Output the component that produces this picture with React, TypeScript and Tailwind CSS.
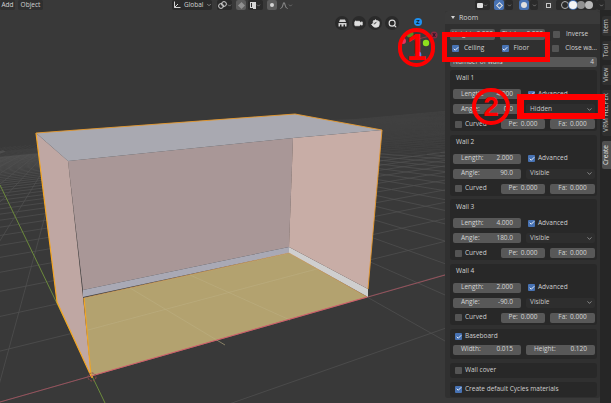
import React from 'react';
import { ChevronDown, Hand, Search, Video, Check } from 'lucide-react';

const FONT = { fontFamily: '"Open Sans", sans-serif' };

// floor homography: world (0..1, 0..1) maps onto the room's floor quad
const quad = [[91, 376], [367, 297], [289, 253], [84, 298]];

const makeProjector = () => {
    const [[x0, y0], [x1, y1], [x2, y2], [x3, y3]] = quad;
    const dx1 = x1 - x2, dx2 = x3 - x2, sx = x0 - x1 + x2 - x3;
    const dy1 = y1 - y2, dy2 = y3 - y2, sy = y0 - y1 + y2 - y3;
    const det = dx1 * dy2 - dx2 * dy1;
    const g = (sx * dy2 - dx2 * sy) / det;
    const h = (dx1 * sy - sx * dy1) / det;
    const a = x1 - x0 + g * x1, b = x3 - x0 + h * x3;
    const d = y1 - y0 + g * y1, e = y3 - y0 + h * y3;
    return (u: number, v: number) => {
        const w = g * u + h * v + 1;
        return { x: (a * u + b * v + x0) / w, y: (d * u + e * v + y0) / w, w };
    };
};

const project = makeProjector();

const gridLines = () => {
    const lines: { x1: number; y1: number; x2: number; y2: number }[] = [];
    const push = (u1: number, v1: number, u2: number, v2: number) => {
        // walk along the line and keep the part in front of the horizon
        let prev = null as null | { x: number; y: number };
        const steps = 24;
        for (let i = 0; i <= steps; i++) {
            const t = i / steps;
            const p = project(u1 + (u2 - u1) * t, v1 + (v2 - v1) * t);
            if (p.w > 0.12) {
                if (prev) lines.push({ x1: prev.x, y1: prev.y, x2: p.x, y2: p.y });
                prev = p;
            } else {
                prev = null;
            }
        }
    };
    for (let i = -40; i <= 60; i++) {
        push(i / 4, -20, i / 4, 40);
        push(-20, i / 2, 40, i / 2);
    }
    return lines;
};

const Viewport = () => {
    const lines = gridLines();
    return (
        <svg width="445" height="403" viewBox="0 0 445 403" className="block shrink-0">
            <rect width="445" height="403" fill="#393939" />
            {lines.map((l, i) => (
                <line key={i} x1={l.x1} y1={l.y1} x2={l.x2} y2={l.y2} stroke={l.y2 < 150 ? '#404040' : '#515151'} strokeWidth="0.7" />
            ))}
            <line x1="0" y1="402" x2="445" y2="275" stroke="#96525c" strokeWidth="1" />
            <line x1="0" y1="185" x2="105" y2="403" stroke="#6c8a3c" strokeWidth="1" />

            <polygon points="84,298 289,253 367,297 91,376" fill="#b3a26f" />
            <line x1="130" y1="288" x2="225" y2="345" stroke="#bcae82" strokeWidth="0.6" />
            <line x1="190" y1="275" x2="290" y2="320" stroke="#bcae82" strokeWidth="0.6" />
            <line x1="88" y1="330" x2="328" y2="266" stroke="#bcae82" strokeWidth="0.6" />
            <polygon points="68,161 293,138 289,247 83,290" fill="#a99797" />
            <polygon points="83,290 289,247 289,253 83,297" fill="#a9a9b5" />
            <polygon points="289,247 368,289 368,297 289,253" fill="#cfcfcf" />
            <polygon points="293,138 382,130 368,289 289,247" fill="#c8ada6" />
            <polygon points="36,133 68,161 83,297 91,376 57,302" fill="#bfa7a3" />
            <polygon points="36,133 295,114 382,130 293,138 68,161" fill="#a9a9b1" />

            <polyline points="36,133 57,302 91,376 84,298" fill="none" stroke="#f5a623" strokeWidth="1.2" />
            <polyline points="36,133 295,114 382,130 368,289" fill="none" stroke="#e89a2c" strokeWidth="0.9" />
            <line x1="84" y1="298" x2="289" y2="253" stroke="#e3a65c" strokeWidth="0.6" />
            <line x1="289" y1="253" x2="367" y2="297" stroke="#e3a65c" strokeWidth="0.6" />
            <line x1="91" y1="376" x2="367" y2="297" stroke="#d0616b" strokeWidth="1" />
            <circle cx="92" cy="377" r="4" fill="none" stroke="#8c4b4b" strokeWidth="1" strokeDasharray="2 1" />
            <circle cx="92" cy="377" r="1" fill="#f5a623" />

            {/* axis gizmo */}
            <line x1="414" y1="40" x2="434" y2="35" stroke="#8f3a45" strokeWidth="1" />
            <circle cx="418" cy="22" r="4" fill="#1e90f0" />
            <text x="418" y="24" textAnchor="middle" fontSize="6" fontWeight="700" fill="#10202c" style={FONT}>Z</text>
            <circle cx="434" cy="35" r="3.5" fill="#8a2a40" />
            <text x="434" y="37" textAnchor="middle" fontSize="5" fontWeight="700" fill="#10101c" style={FONT}>X</text>
            <circle cx="410" cy="34" r="3.5" fill="#5e8a1e" />
            <circle cx="403" cy="41" r="3" fill="#e8305a" />
            <circle cx="426" cy="43" r="3.2" fill="#8fe01e" />
            <circle cx="418" cy="55" r="3.4" fill="#2f83d8" />
        </svg>
    );
};

const Field = ({ label, value, className }: { label: string; value?: string; className: string }) => (
    <div className={`flex h-[10px] items-center justify-between rounded-[2px] bg-[#585858] px-2 text-[6.5px] leading-none text-[#d4d4d4] ${className}`}>
        <span>{label}</span>
        {value && <span>{value}</span>}
    </div>
);

const Box = ({ on }: { on: boolean }) => (
    <span className={`flex h-[7px] w-[7px] shrink-0 items-center justify-center rounded-[1px] ${on ? 'bg-[#4772b3]' : 'bg-[#545454]'}`}>
        {on && <Check size={6} strokeWidth={3.5} color="#ffffff" />}
    </span>
);

const CheckLabel = ({ on, label, className = '' }: { on: boolean; label: string; className?: string }) => (
    <div className={`flex h-[10px] items-center gap-[3px] text-[6.5px] leading-none text-[#d0d0d0] ${className}`}>
        <Box on={on} />
        <span className="whitespace-nowrap">{label}</span>
    </div>
);

const Wall = ({ name, length, angle, mode }: { name: string; length: string; angle: string; mode: string }) => (
    <div className="h-[61px] shrink-0 rounded-[3px] bg-[#282828] pl-[3px] pr-[2px]">
        <div className="flex h-[16px] items-center pl-[3px] text-[6.5px] leading-none text-[#d4d4d4]">{name}</div>
        <div className="mt-[3px] flex flex-col gap-[5px]">
            <div className="flex items-center">
                <Field label="Length:" value={length} className="w-[68px]" />
                <CheckLabel on label="Advanced" className="ml-[7px]" />
            </div>
            <div className="flex items-center gap-[5px]">
                <Field label="Angle:" value={angle} className="w-[68px]" />
                <div className="flex h-[10px] w-[69px] items-center justify-between rounded-[2px] bg-[#2e2e2e] pl-[4px] pr-[2px] text-[6.5px] leading-none text-[#c8c8c8]">
                    <span>{mode}</span>
                    <ChevronDown size={7} color="#c8c8c8" />
                </div>
            </div>
            <div className="flex items-center">
                <CheckLabel on={false} label="Curved" className="ml-[2px] w-[46px]" />
                <Field label="Pe:" value="0.000" className="w-[44px] justify-center gap-[3px] !px-0" />
                <Field label="Fa:" value="0.000" className="ml-[5px] w-[45px] justify-center gap-[3px] !px-0" />
            </div>
        </div>
    </div>
);

const Panel = () => (
    <div className="mt-[11px] flex h-[387px] w-[155px] shrink-0 flex-col rounded-[3px] bg-[#303030] pl-[5px] pr-[3px]" style={FONT}>
        <div className="-ml-[5px] -mr-[3px] flex h-[13px] items-center gap-[4px] rounded-t-[3px] bg-[#3a3a3a] pl-[6px] text-[7px] leading-none text-[#d4d4d4]">
            <span className="h-0 w-0 border-x-[2px] border-t-[3px] border-x-transparent border-t-[#d4d4d4]" />
            <span>Room</span>
        </div>
        <div className="mt-[5px] flex h-[11px] items-center">
            <Field label="Height:" value="3.000" className="h-[11px] w-[45px] !px-[2px]" />
            <Field label="Thick:" value="0.000" className="ml-[5px] h-[11px] w-[45px] !px-[2px]" />
            <CheckLabel on={false} label="Inverse" className="ml-[8px] gap-[6px]" />
        </div>
        <div className="flex h-[17px] items-center">
            <CheckLabel on label="Ceiling" className="ml-[2px] w-[50px] gap-[5px]" />
            <CheckLabel on label="Floor" className="w-[51px] gap-[5px]" />
            <CheckLabel on={false} label="Close wa..." className="gap-[6px]" />
        </div>
        <Field label="Number of walls" value="4" className="h-[9px] !px-[3px]" />
        <div className="mt-[3px] flex flex-col gap-[3.5px]">
            <Wall name="Wall 1" length="4.000" angle="0.0" mode="Hidden" />
            <Wall name="Wall 2" length="2.000" angle="90.0" mode="Visible" />
            <Wall name="Wall 3" length="4.000" angle="180.0" mode="Visible" />
            <Wall name="Wall 4" length="2.000" angle="-90.0" mode="Visible" />
        </div>
        <div className="mt-[4px] h-[30px] shrink-0 rounded-[3px] bg-[#282828] pl-[3px] pr-[2px]">
            <CheckLabel on label="Baseboard" className="ml-[2px] mt-[3px]" />
            <div className="mt-[3px] flex gap-[5px]">
                <Field label="Width:" value="0.015" className="w-[68px]" />
                <Field label="Height:" value="0.120" className="w-[69px]" />
            </div>
        </div>
        <div className="mt-[4px] flex h-[15px] shrink-0 items-center rounded-[3px] bg-[#282828] pl-[5px]">
            <CheckLabel on={false} label="Wall cover" />
        </div>
        <div className="mt-[4px] flex h-[15px] shrink-0 items-center rounded-[3px] bg-[#282828] pl-[5px]">
            <CheckLabel on label="Create default Cycles materials" />
        </div>
    </div>
);

const Tab = ({ label, className = '' }: { label: string; className?: string }) => (
    <div className={`flex items-center justify-center rounded-r-[2px] text-[6.5px] leading-none [writing-mode:vertical-rl] rotate-180 whitespace-nowrap ${className}`}>
        {label}
    </div>
);

const Tabs = () => (
    <div className="mt-[10px] flex h-[393px] w-[11px] shrink-0 flex-col gap-[5px] bg-[#262626] pl-[2px] pt-[6px]" style={FONT}>
        <Tab label="Item" className="h-[20px] bg-[#2f2f2f] text-[#c8c8c8]" />
        <Tab label="Tool" className="h-[19px] bg-[#2f2f2f] text-[#c8c8c8]" />
        <Tab label="View" className="h-[20px] bg-[#2f2f2f] text-[#c8c8c8]" />
        <Tab label="VRM HELPER" className="h-[46px] bg-[#2f2f2f] text-[#c8c8c8]" />
        <Tab label="Create" className="h-[28px] bg-[#505050] text-[#e0e0e0]" />
    </div>
);

const Chip = ({ children, className = '' }: { children?: React.ReactNode; className?: string }) => (
    <div className={`flex h-[10px] items-center justify-center rounded-[2px] text-[6.5px] leading-none text-[#d4d4d4] ${className}`}>
        {children}
    </div>
);

const HeaderBar = () => (
    <div className="absolute left-0 top-0 flex h-[10px] w-[611px] items-center" style={FONT}>
        <Chip className="w-[15px] bg-[#2f2f2f]">Add</Chip>
        <Chip className="ml-[3px] w-[25px] bg-[#2f2f2f]">Object</Chip>
        <Chip className="ml-[129px] w-[40px] !justify-start bg-[#2a2a2a] pl-[1px]">
            <svg width="8" height="8" viewBox="0 0 8 8" fill="none" stroke="#d4d4d4" strokeWidth="1">
                <path d="M1.5 0.5 V6.5 H7.5 M1.5 6.5 L5 3" />
            </svg>
            <span className="ml-[3px]">Global</span>
            <ChevronDown size={6} color="#d4d4d4" className="ml-[2px]" />
        </Chip>
        <Chip className="ml-[5px] w-[15px] bg-[#2a2a2a]">
            <svg width="9" height="8" viewBox="0 0 9 8" fill="none" stroke="#d4d4d4" strokeWidth="1">
                <circle cx="3" cy="5" r="2.4" />
                <circle cx="6" cy="3" r="2.4" />
            </svg>
            <ChevronDown size={5} color="#d4d4d4" />
        </Chip>
        <Chip className="ml-[4px] w-[10px] bg-[#5c5c5c]">
            <span className="h-[5px] w-[5px] rotate-45 bg-[#909090]" />
        </Chip>
        <Chip className="ml-[2px] w-[15px] bg-[#2a2a2a]">
            <span className="h-[6px] w-[3px] border border-[#d4d4d4]" />
            <span className="h-[7px] w-[3px] bg-[#d4d4d4]" />
            <ChevronDown size={5} color="#d4d4d4" />
        </Chip>
        <Chip className="ml-[4px] w-[10px] bg-[#5c5c5c]">
            <span className="h-[4px] w-[4px] rounded-full bg-[#d4d4d4]" />
        </Chip>
        <Chip className="ml-[2px] w-[14px]">
            <svg width="8" height="7" viewBox="0 0 8 7" fill="none" stroke="#b0b0b0" strokeWidth="0.8">
                <path d="M0.5 6.5 C3 6 3 0.5 4 0.5 C5 0.5 5 6 7.5 6.5" />
            </svg>
            <ChevronDown size={5} color="#b0b0b0" />
        </Chip>
        <Chip className="ml-[182px] w-[15px] bg-[#2a2a2a]">
            <span className="h-[5px] w-[6px] rounded-[1px] bg-[#e0e0e0]" />
            <ChevronDown size={5} color="#d4d4d4" />
        </Chip>
        <Chip className="ml-[4px] w-[10px] bg-[#4772b3]">
            <span className="h-[5px] w-[5px] rotate-45 border border-[#e0e0e0]" />
        </Chip>
        <Chip className="ml-[1px] w-[8px] bg-[#2a2a2a]"><ChevronDown size={5} color="#d4d4d4" /></Chip>
        <Chip className="ml-[6px] w-[10px] bg-[#4772b3]">
            <span className="h-[6px] w-[6px] rounded-full bg-[#e0e0e0]" />
        </Chip>
        <Chip className="ml-[1px] w-[8px] bg-[#2a2a2a]"><ChevronDown size={5} color="#d4d4d4" /></Chip>
        <Chip className="ml-[5px] w-[10px] bg-[#3c3c3c]">
            <span className="h-[5px] w-[5px] border border-[#c8c8c8]" />
        </Chip>
        <Chip className="ml-[3px] w-[41px] justify-around bg-[#2a2a2a]">
            <span className="h-[8px] w-[8px] rounded-full border border-[#b0b0b0]" />
            <span className="h-[8px] w-[8px] rounded-full bg-[#f4f4f4] ring-1 ring-[#4772b3]" />
            <span className="h-[8px] w-[8px] rounded-full bg-[#909090]" />
            <span className="h-[8px] w-[8px] rounded-full bg-[#b8b8b8]" />
        </Chip>
        <Chip className="w-[8px] bg-[#2a2a2a]"><ChevronDown size={5} color="#d4d4d4" /></Chip>
    </div>
);

const NavButton = ({ children }: { children: React.ReactNode }) => (
    <div className="flex h-[14px] w-[14px] items-center justify-center rounded-full bg-[#2a2a2a]">{children}</div>
);

const NavGizmos = () => (
    <div className="absolute left-[335px] top-[16px] flex gap-[2.7px]">
        <NavButton>
            <svg width="9" height="8" viewBox="0 0 9 8" fill="#d4d4d4">
                <path d="M2 0.5 H7 L8 3 H1 Z M0.5 4 H8.5 V7.5 H7 V5.5 H5.5 V7.5 H3.5 V5.5 H2 V7.5 H0.5 Z" />
            </svg>
        </NavButton>
        <NavButton><Video size={9} color="#e0e0e0" fill="#e0e0e0" /></NavButton>
        <NavButton><Hand size={9} color="#e0e0e0" fill="#e0e0e0" /></NavButton>
        <NavButton><Search size={9} color="#e0e0e0" strokeWidth={3} /></NavButton>
    </div>
);

const Marker = ({ n, className }: { n: string; className: string }) => (
    <div className={`absolute flex items-center justify-center rounded-full border-[4px] border-[#ff0000] font-bold leading-none text-[#ff0000] ${className}`} style={{ fontFamily: '"Liberation Sans", sans-serif' }}>
        {n}
    </div>
);

const App: React.FC = () => (
    <div className="relative flex h-[403px] w-[611px] overflow-hidden bg-[#393939]">
        <Viewport />
        <Panel />
        <Tabs />
        <HeaderBar />
        <NavGizmos />
        <div className="absolute left-[442px] top-[32px] h-[30px] w-[108px] border-[5px] border-[#ff0000]" />
        <div className="absolute left-[517px] top-[94px] h-[25px] w-[88px] border-x-[7px] border-y-[6px] border-[#ff0000]" />
        <Marker n="1" className="left-[398px] top-[28px] h-[39px] w-[37px] text-[36px]" />
        <Marker n="2" className="left-[472px] top-[88px] h-[37px] w-[38px] text-[28px]" />
    </div>
);

export default App;
